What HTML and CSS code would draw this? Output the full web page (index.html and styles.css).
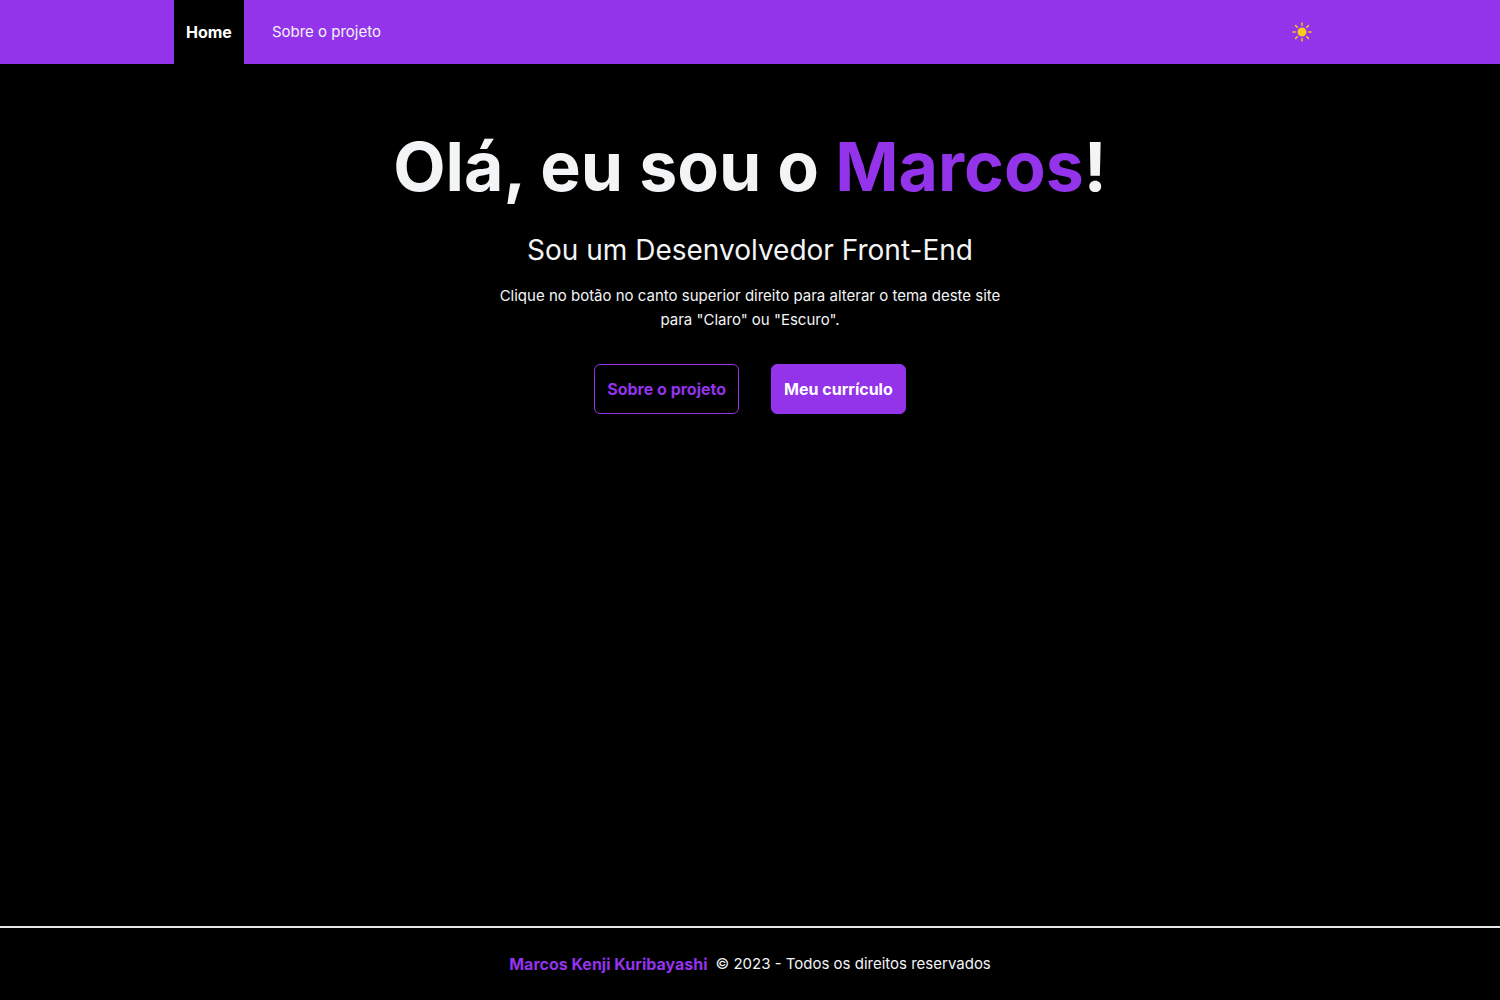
FILE: index.html
```html
<!DOCTYPE html>
<html lang="pt-BR">
<head>
<meta charset="utf-8">
<meta name="viewport" content="width=device-width, initial-scale=1">
<title>Marcos Kenji Kuribayashi</title>
<link rel="stylesheet" href="styles.css">
</head>
<body>
<header class="site-header">
  <div class="header-inner">
    <nav class="nav">
      <a class="nav-link nav-link-active" href="#">Home</a>
      <a class="nav-link" href="#sobre">Sobre o projeto</a>
    </nav>
    <button class="theme-button" type="button" aria-label="Alterar tema">
      <svg class="theme-icon" viewBox="0 0 24 24" aria-hidden="true">
        <path d="M12 2.25a.75.75 0 01.75.75v2.25a.75.75 0 01-1.5 0V3a.75.75 0 01.75-.75zM7.5 12a4.5 4.5 0 119 0 4.5 4.5 0 01-9 0zM18.894 6.166a.75.75 0 00-1.06-1.06l-1.591 1.59a.75.75 0 101.06 1.061l1.591-1.59zM21.75 12a.75.75 0 01-.75.75h-2.25a.75.75 0 010-1.5H21a.75.75 0 01.75.75zM17.834 18.894a.75.75 0 001.06-1.06l-1.59-1.591a.75.75 0 10-1.061 1.06l1.59 1.591zM12 18a.75.75 0 01.75.75V21a.75.75 0 01-1.5 0v-2.25A.75.75 0 0112 18zM7.758 17.303a.75.75 0 00-1.061-1.06l-1.591 1.59a.75.75 0 001.06 1.061l1.591-1.59zM6 12a.75.75 0 01-.75.75H3a.75.75 0 010-1.5h2.25A.75.75 0 016 12zM6.697 7.757a.75.75 0 001.06-1.06l-1.59-1.591a.75.75 0 00-1.061 1.06l1.59 1.591z"/>
      </svg>
    </button>
  </div>
</header>
<main class="hero">
  <h1 class="hero-title">Olá, eu sou o <span class="accent">Marcos</span>!</h1>
  <h2 class="hero-subtitle">Sou um Desenvolvedor Front-End</h2>
  <p class="hero-text">Clique no botão no canto superior direito para alterar o tema deste site para "Claro" ou "Escuro".</p>
  <div class="actions">
    <a class="button button-outline" href="#sobre">Sobre o projeto</a>
    <a class="button button-solid" href="#curriculo">Meu currículo</a>
  </div>
</main>
<footer class="site-footer">
  <a class="footer-link" href="#autor">Marcos Kenji Kuribayashi</a>
  <span>© 2023 - Todos os direitos reservados</span>
</footer>
</body>
</html>
```

FILE: styles.css
```css
* { box-sizing: border-box; }

body {
  display: flex;
  flex-direction: column;
  min-height: 100vh;
  margin: 0;
  background: #000;
  color: #f3f4f6;
  font-family: Inter, "Liberation Sans", sans-serif;
  font-size: 15px;
  line-height: 24px;
}

a { color: inherit; text-decoration: none; }

.site-header { background: #9333ea; }

.header-inner {
  display: flex;
  justify-content: space-between;
  align-items: center;
  max-width: 1152px;
  margin: 0 auto;
}

.nav { display: flex; gap: 16px; }

.nav-link { padding: 20px 12px; }

.nav-link-active {
  background: #000;
  color: #fff;
  font-size: 16px;
  font-weight: 700;
}

.theme-button {
  display: flex;
  padding: 12px;
  border: 0;
  background: transparent;
  color: #facc15;
  cursor: pointer;
}

.theme-icon {
  width: 24px;
  height: 24px;
  fill: currentColor;
}

.hero {
  display: flex;
  flex: 1;
  flex-direction: column;
  align-items: center;
  padding: 64px 16px;
  text-align: center;
}

.hero-title {
  margin: 0 0 28px;
  font-size: 68px;
  font-weight: 700;
  line-height: 76px;
}

.accent { color: #9333ea; }

.hero-subtitle {
  margin: 0 0 16px;
  font-size: 28px;
  font-weight: 400;
  line-height: 36px;
}

.hero-text {
  max-width: 520px;
  margin: 0 0 32px;
}

.actions { display: flex; gap: 32px; }

.button {
  padding: 12px;
  border: 1px solid #9333ea;
  border-radius: 6px;
  font-size: 16px;
  font-weight: 700;
}

.button-outline { color: #9333ea; }

.button-solid { background: #9333ea; color: #fff; }

.site-footer {
  display: flex;
  justify-content: center;
  gap: 8px;
  padding: 24px 16px;
  border-top: 2px solid #e5e7eb;
}

.footer-link {
  color: #9333ea;
  font-size: 16px;
  font-weight: 700;
}
```
